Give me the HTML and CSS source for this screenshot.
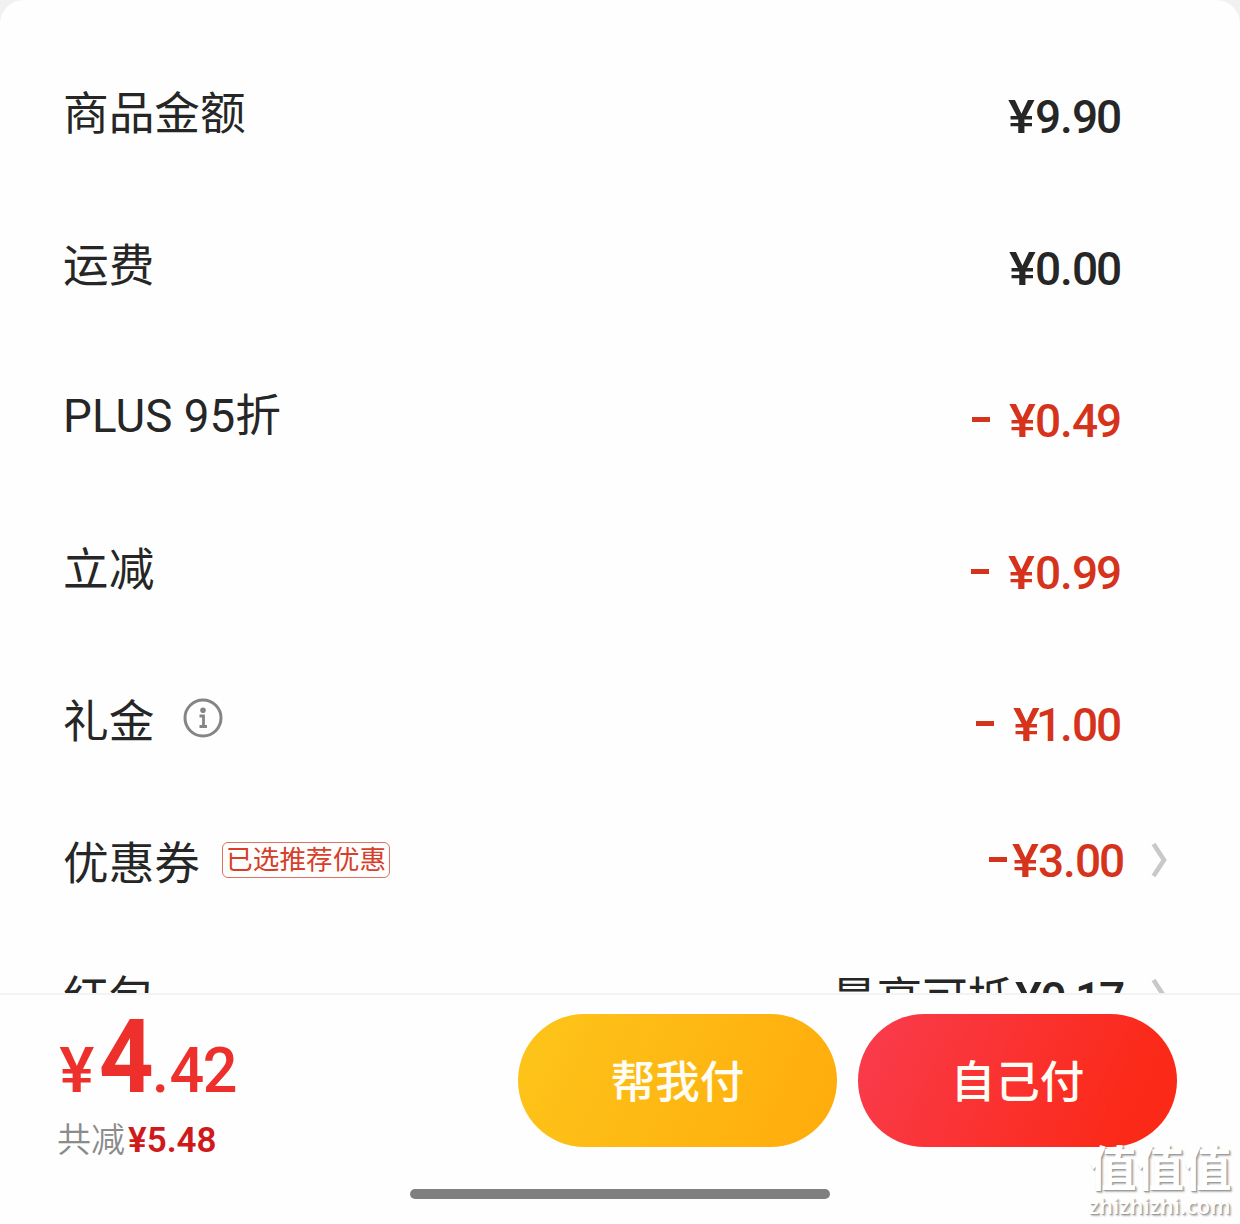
FILE: index.html
```html
<!DOCTYPE html>
<html lang="zh-CN">
<head>
<meta charset="utf-8">
<title>结算</title>
<link rel="stylesheet" href="styles.css">
</head>
<body>
<main class="sheet">
  <section class="list">
    <div class="row"><span class="label">商品金额</span><span class="amount wide"><span class="y">¥</span>9<span class="d">.</span>90</span></div>
    <div class="row"><span class="label">运费</span><span class="amount"><span class="y">¥</span>0<span class="d">.</span>00</span></div>
    <div class="row"><span class="label latin">PLUS 95折</span><span class="amount red"><i class="minus"></i><span class="y">¥</span>0<span class="d">.</span>49</span></div>
    <div class="row"><span class="label">立减</span><span class="amount red wide"><i class="minus"></i><span class="y">¥</span>0<span class="d">.</span>99</span></div>
    <div class="row"><span class="label">礼金</span>
      <svg class="info" viewBox="0 0 40 40"><circle cx="20" cy="20" r="18" fill="none" stroke="#858585" stroke-width="3"/><circle cx="20" cy="12.3" r="2.8" fill="#858585"/><path d="M16.5 18H20.5V28M16.5 28.5H24" fill="none" stroke="#858585" stroke-width="2.8"/></svg>
      <span class="amount red one"><i class="minus"></i><span class="y">¥</span>1<span class="d">.</span>00</span></div>
    <div class="row coupon"><span class="label">优惠券</span><span class="tag">已选推荐优惠</span><span class="amount red"><i class="minus"></i><span class="y">¥</span>3<span class="d">.</span>00</span>
      <svg class="chevron" viewBox="0 0 16 38"><path d="M2.5 3L13 19L2.5 35" fill="none" stroke="#c8c8c8" stroke-width="4.6"/></svg></div>
    <div class="row packet"><span class="label">红包</span><span class="amount"><span class="cjk">最高可抵</span><span class="y">¥</span>0<span class="d">.</span>17</span>
      <svg class="chevron" viewBox="0 0 16 38"><path d="M2.5 3L13 19L2.5 35" fill="none" stroke="#c8c8c8" stroke-width="4.6"/></svg></div>
  </section>
  <footer class="bar">
    <div class="total">
      <div class="price"><span class="yen">¥</span><span class="int">4</span><span class="dec"><span class="point">.</span>42</span></div>
      <div class="saved">共减<b>¥5.48</b></div>
    </div>
    <button class="btn yellow">帮我付</button>
    <button class="btn crimson">自己付</button>
  </footer>
  <div class="home"></div>
  <div class="mark"><div class="mark-name">值值值</div><div class="mark-url">zhizhizhi.com</div></div>
</main>
</body>
</html>
```
FILE: styles.css
```css
* { box-sizing: border-box; }
body { margin: 0; background: #f1f1f1; font-family: Roboto, "Noto Sans CJK SC", sans-serif; color: #262626; }
.sheet { position: relative; width: 1240px; height: 1224px; background: #fefefe; border-radius: 24px 24px 0 0; overflow: hidden; }
.list { height: 995px; padding: 36px 73px 0 63px; overflow: hidden; border-bottom: 2px solid #f3f3f3; }
.row { display: flex; align-items: center; height: 152px; padding-right: 47px; }
.label { margin-top: -5px; font: 400 45.7px/60px "Noto Sans CJK SC", sans-serif; white-space: nowrap; }
.label.latin { margin-top: 2px; font-family: Roboto, "Noto Sans CJK SC", sans-serif; letter-spacing: 0.1px; }
.amount { display: flex; align-items: center; margin-left: auto; padding-top: 10px; font-size: 46px; line-height: 60px; font-weight: 500; letter-spacing: -2.2px; white-space: nowrap; }
.y { margin-right: 3px; transform: scaleX(1.1); }
.d { margin: 0 1.5px 0 1px; }
.wide .y { margin-right: 4px; }
.one .y { margin-right: 0; }
.one .d { margin-left: 0; }
.red { color: #d6331c; }
.minus { width: 18px; height: 5px; margin: -4px 20px 0 0; background: currentColor; }
.info { width: 40px; height: 40px; margin: -4px 0 0 29px; }
.coupon { height: 132px; padding-right: 0; }
.coupon .amount { padding-top: 0; margin-top: -2px; }
.coupon .minus { margin-right: 6px; }
.tag { height: 36px; margin: -4px 0 0 22px; padding: 0 3px; border: 1px solid #e0705f; border-radius: 6px; color: #d6402a; font: 400 26.7px/30px "Noto Sans CJK SC", sans-serif; }
.chevron { width: 16px; height: 38px; margin: -5px 0 0 28px; }
.packet { height: 140px; padding-right: 0; }
.packet .label { margin-top: -9px; }
.packet .amount { padding-top: 0; margin-top: 1px; }
.cjk { margin: -8px 3px 0 0; font: 400 45.5px/60px "Noto Sans CJK SC", sans-serif; letter-spacing: 0; }
.packet .y { margin-right: 2px; }
.packet .d { margin: 0; }
.bar { display: flex; height: 172px; padding: 19px 63px 0 57px; }
.total { width: 461px; color: #ee302d; }
.price { display: flex; align-items: baseline; height: 102px; margin-top: -7px; line-height: 100px; font-weight: 500; }
.yen { margin: 0 4px 0 3px; font-size: 63px; transform: scaleX(1.05); }
.int { font-size: 102px; font-weight: 700; transform: scaleX(0.94); }
.dec { margin-left: -4px; font-size: 63px; letter-spacing: -1.5px; transform: scaleX(0.97); transform-origin: left; }
.point { margin-right: 2px; }
.saved { height: 44px; margin-top: 7px; font: 350 34px/44px "Noto Sans CJK SC", sans-serif; color: #8b8b8b; white-space: nowrap; }
.saved b { margin-left: 3px; font: 600 35px/44px Roboto, sans-serif; color: #cf1a1c; }
.btn { width: 319px; height: 133px; padding: 0 0 4px; border: 0; border-radius: 67px; color: #fffdf4; font: 500 44.5px/60px "Noto Sans CJK SC", sans-serif; }
.yellow { background: linear-gradient(115deg, #fdc51a, #ffab0c); }
.crimson { margin-left: 21px; background: linear-gradient(115deg, #f93c4e, #fb2917 85%); }
.home { width: 420px; height: 10px; margin: 22px auto 0; border-radius: 5px; background: #7f7f7f; }
.mark { position: absolute; left: 1089px; top: 1137px; width: 145px; color: #fff; text-shadow: 1px 1px 1px #999, 2px 2px 2px #bbb; white-space: nowrap; }
.mark-name { font: 700 47.5px/58px "Noto Sans CJK SC", sans-serif; }
.mark-url { font: 600 21px/22px "Open Sans", sans-serif; letter-spacing: 0.4px; }
```
